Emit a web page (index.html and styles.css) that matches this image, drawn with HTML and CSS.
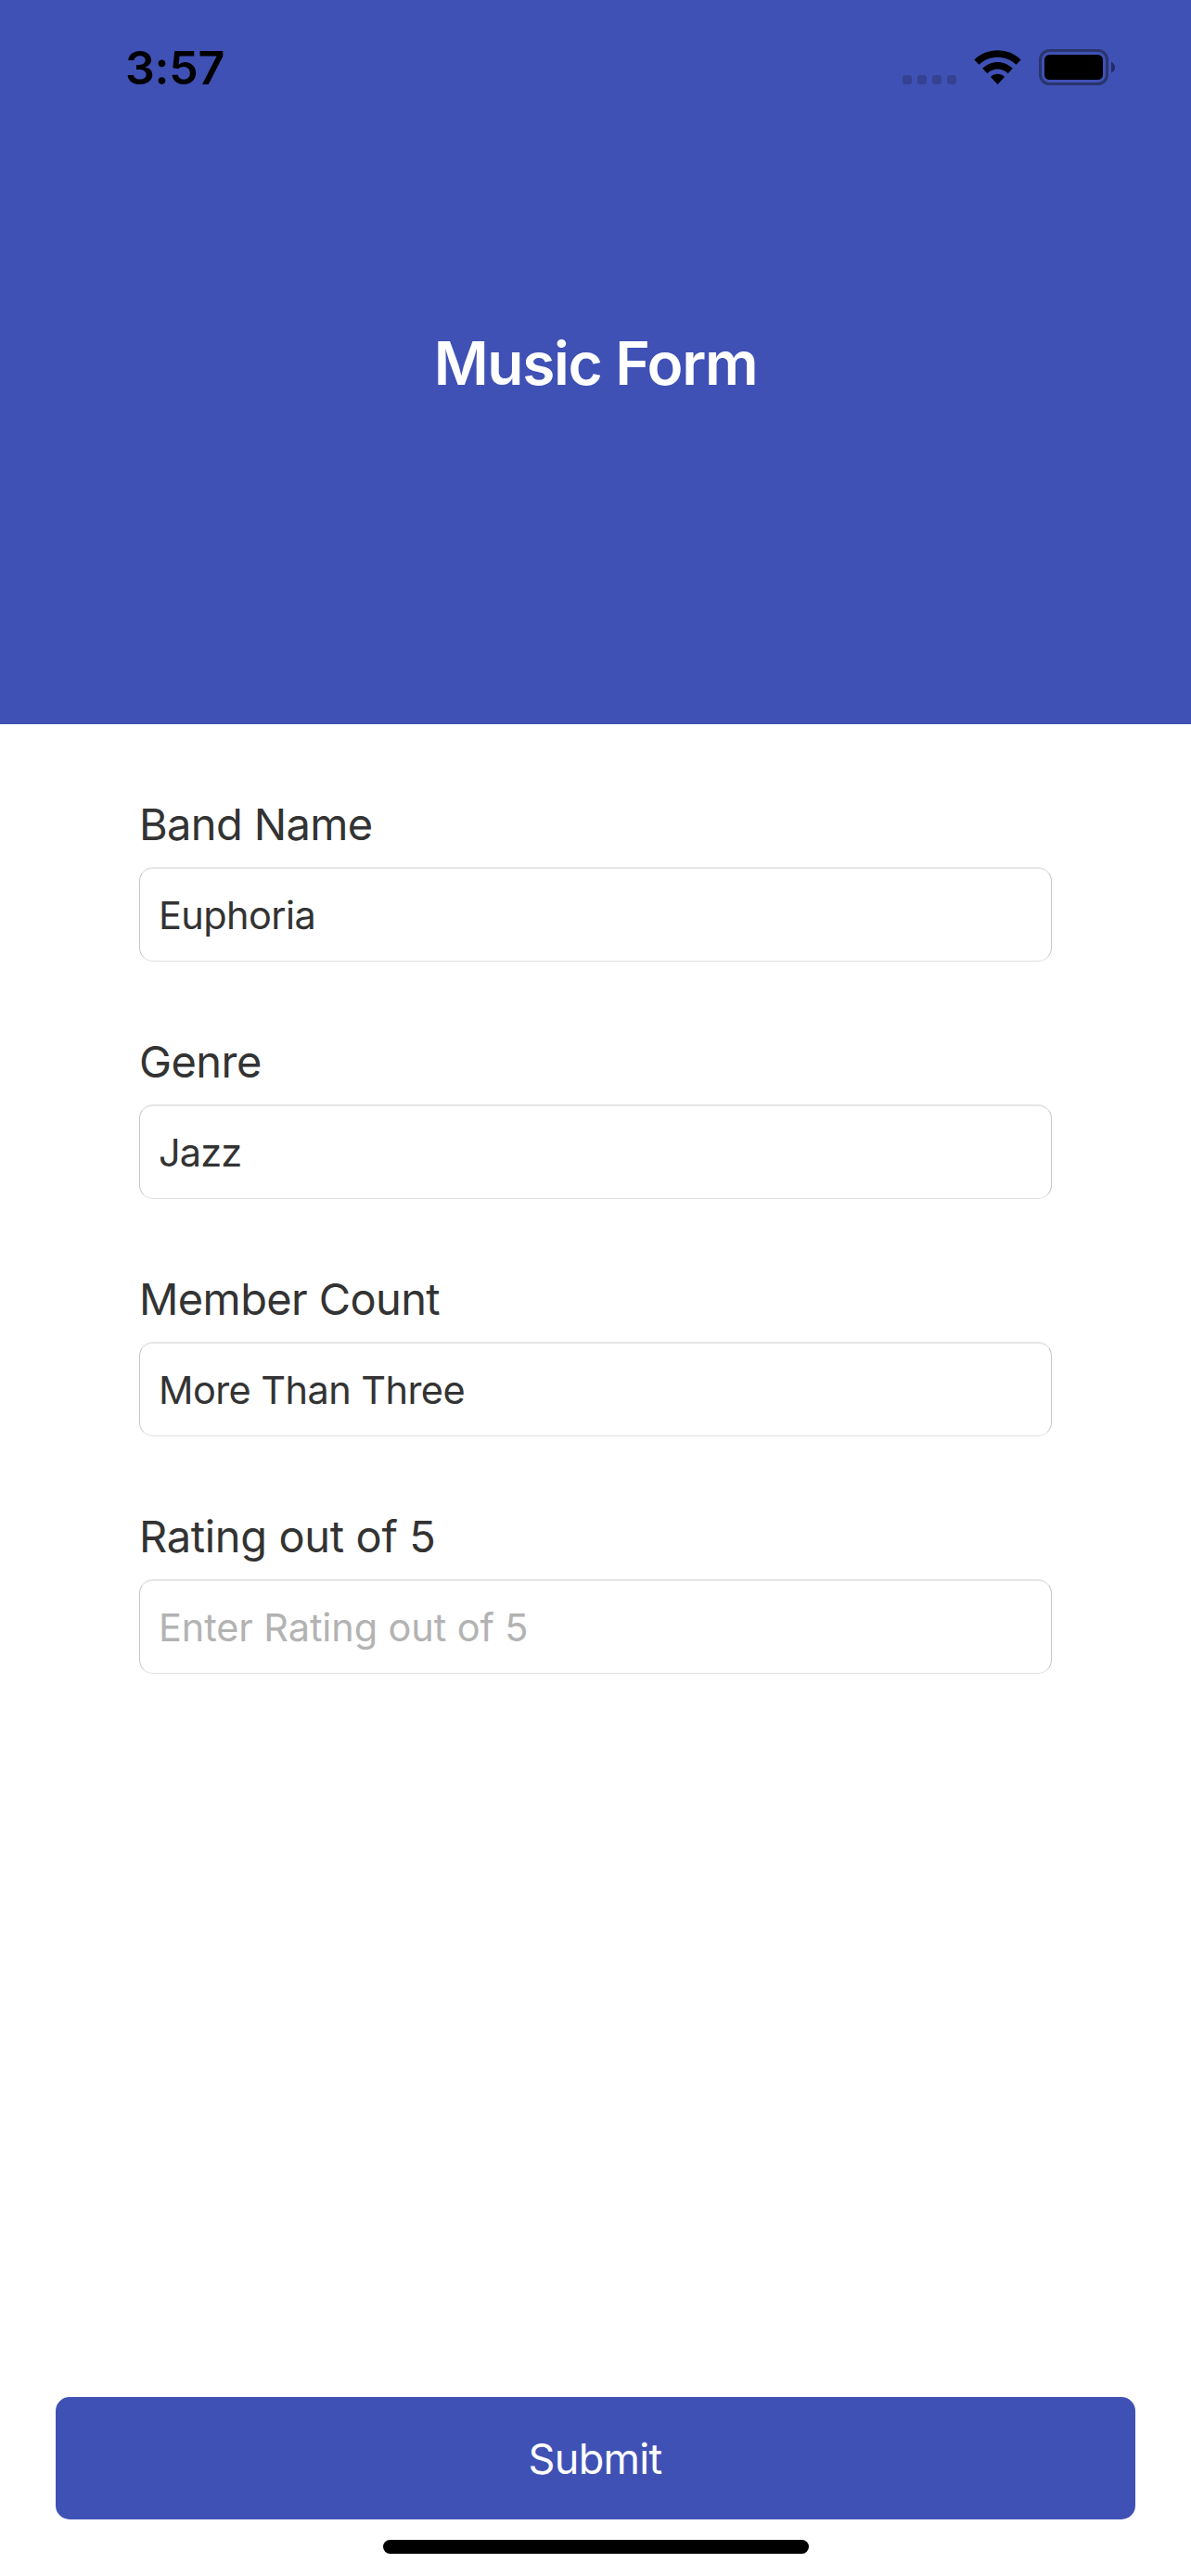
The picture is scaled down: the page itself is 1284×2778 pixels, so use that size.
FILE: index.html
```html
<!DOCTYPE html>
<html lang="en">
<head>
<meta charset="utf-8">
<title>Music Form</title>
<link rel="stylesheet" href="styles.css">
</head>
<body>
<header class="header">
  <div class="status-bar">
    <span class="time">3:57</span>
    <svg class="status-icons" viewBox="0 0 232 40" width="232" height="40" aria-hidden="true">
      <g fill="#344291">
        <rect x="1" y="28" width="10" height="10" rx="3"/>
        <rect x="17" y="28" width="10" height="10" rx="3"/>
        <rect x="33" y="28" width="10" height="10" rx="3"/>
        <rect x="49" y="28" width="10" height="10" rx="3"/>
      </g>
      <path d="M78.4 11.4C92-2.2 115-2.2 128.6 11.4L123.400 16.800C112.500 6.200 94.500 6.200 83.600 16.800Z"/>
      <path d="M87.200 20.800C96.400 11.600 110.600 11.600 119.800 20.800L114.600 26.200C108.400 20 98.600 20 92.400 26.200Z"/>
      <path d="M96 30C100.200 25.600 106.800 25.600 111 30L103.500 38Z"/>
      <rect x="149.500" y="1.500" width="72" height="36" rx="10" fill="none" stroke="#29346d" stroke-width="3"/>
      <rect x="154" y="6" width="63" height="27" rx="5.500"/>
      <path d="M226 13.500C231.300 16 231.300 23.500 226 25.500Z" fill="#222c62"/>
    </svg>
  </div>
  <h1 class="title">Music Form</h1>
</header>
<form class="form">
  <div class="fields">
    <div class="field">
      <label class="label label-band" for="band">Band Name</label>
      <input class="input input-band" id="band" value="Euphoria">
    </div>
    <div class="field">
      <label class="label label-genre" for="genre">Genre</label>
      <input class="input input-genre" id="genre" value="Jazz">
    </div>
    <div class="field">
      <label class="label label-members" for="members">Member Count</label>
      <input class="input input-members" id="members" value="More Than Three">
    </div>
    <div class="field">
      <label class="label label-rating" for="rating">Rating out of 5</label>
      <input class="input input-rating" id="rating" placeholder="Enter Rating out of 5">
    </div>
  </div>
  <button class="submit" type="button"><span>Submit</span></button>
</form>
<div class="home-indicator"></div>
</body>
</html>
```
FILE: styles.css
```css
* {
  box-sizing: border-box;
}

body {
  display: flex;
  flex-direction: column;
  height: 2778px;
  margin: 0;
  background: #fff;
  color: #333;
  font-family: Inter, "Liberation Sans", sans-serif;
}

.header {
  flex: none;
  height: 781px;
  background: #3f51b5;
}

.status-bar {
  display: flex;
  align-items: flex-start;
  justify-content: space-between;
  height: 141px;
  padding: 53px 80px 0 135px;
  color: #000;
}

.time {
  margin-top: -10px;
  font-size: 50px;
  font-weight: 560;
  letter-spacing: -0.2px;
  line-height: 60px;
}

.title {
  margin: 211px 0 0;
  color: #fff;
  font-size: 64px;
  font-weight: 600;
  letter-spacing: -1.3px;
  line-height: 80px;
  text-align: center;
}

.form {
  display: flex;
  flex: 1;
  flex-direction: column;
  justify-content: space-between;
  padding: 78px 60px 0;
}

.fields {
  display: grid;
  gap: 78px;
  padding: 0 90px;
}

.field {
  display: flex;
  flex-direction: column;
  gap: 16px;
}

.label {
  font-size: 47px;
  line-height: 60px;
}

.label-band {
  letter-spacing: -0.65px;
}

.label-genre {
  letter-spacing: -0.55px;
}

.label-members {
  letter-spacing: -0.63px;
}

.label-rating {
  letter-spacing: -0.36px;
}

.input {
  width: 984px;
  height: 102px;
  padding: 0 20px;
  border: 1px solid #c8c8c8;
  border-top: 2px solid #e6e6e6;
  border-bottom-color: #e0e0e0;
  border-radius: 15px;
  background: #fff;
  color: #333;
  font: 41.5px/60px Inter, "Liberation Sans", sans-serif;
}

.input-band {
  letter-spacing: -0.6px;
}

.input-genre {
  letter-spacing: -0.9px;
}

.input-members {
  letter-spacing: -0.57px;
}

.input-rating {
  letter-spacing: -0.13px;
}

.input::placeholder {
  color: #b3b3b3;
}

.submit {
  height: 132px;
  padding: 2px 1px 0 0;
  border: 0;
  border-radius: 15px;
  background: #3f51b5;
  color: #fff;
  font: 45px/60px Inter, "Liberation Sans", sans-serif;
  letter-spacing: -0.7px;
}

.home-indicator {
  width: 459px;
  height: 15px;
  margin: 22px auto 24px;
  border-radius: 8px;
  background: #000;
}
```
